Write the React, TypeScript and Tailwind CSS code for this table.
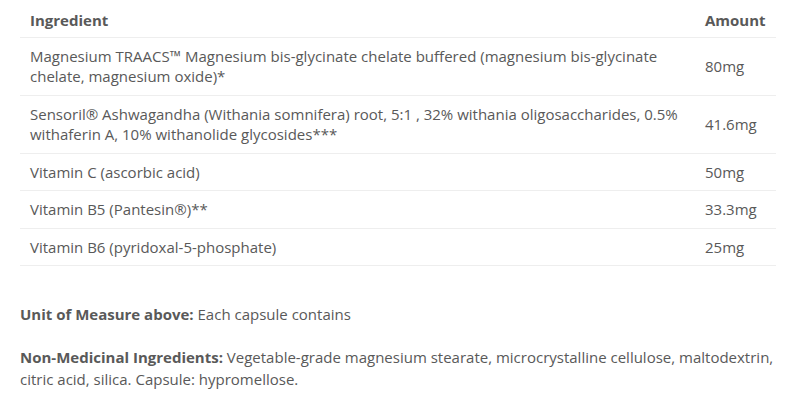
import React from "react";

const rows: [React.ReactNode, string][] = [
  [
    "Magnesium TRAACS™ Magnesium bis-glycinate chelate buffered (magnesium bis-glycinate chelate, magnesium oxide)*",
    "80mg",
  ],
  [
    "Sensoril® Ashwagandha (Withania somnifera) root, 5:1 , 32% withania oligosaccharides, 0.5% withaferin A, 10% withanolide glycosides***",
    "41.6mg",
  ],
  ["Vitamin C (ascorbic acid)", "50mg"],
  ["Vitamin B5 (Pantesin®)**", "33.3mg"],
  ["Vitamin B6 (pyridoxal-5-phosphate)", "25mg"],
];

export default function App() {
  return (
    <div
      className="bg-white px-5 text-[15px] leading-[20.5px] text-[#595959]"
      style={{ fontFamily: '"Open Sans", sans-serif' }}
    >
      <table className="w-[756px] border-collapse">
        <thead>
          <tr className="border-b border-[#eeeeee]">
            <th className="px-[10px] pt-[10px] pb-[6px] text-left font-bold">Ingredient</th>
            <th className="w-[81px] px-[10px] pt-[10px] pb-[6px] text-left font-bold">Amount</th>
          </tr>
        </thead>
        <tbody>
          {rows.map(([name, amt], i) => (
            <tr key={i} className="border-b border-[#eeeeee]">
              <td className="px-[10px] py-2 align-middle">{name}</td>
              <td className="px-[10px] py-2 align-middle">{amt}</td>
            </tr>
          ))}
        </tbody>
      </table>
      <p className="mt-[38px]">
        <span className="font-bold">Unit of Measure above:</span> Each capsule contains
      </p>
      <p className="mt-[21px] w-[760px] leading-[22px]">
        <span className="font-bold">Non-Medicinal Ingredients:</span> Vegetable-grade magnesium stearate,
        microcrystalline cellulose, maltodextrin, citric acid, silica. Capsule: hypromellose.
      </p>
    </div>
  );
}
